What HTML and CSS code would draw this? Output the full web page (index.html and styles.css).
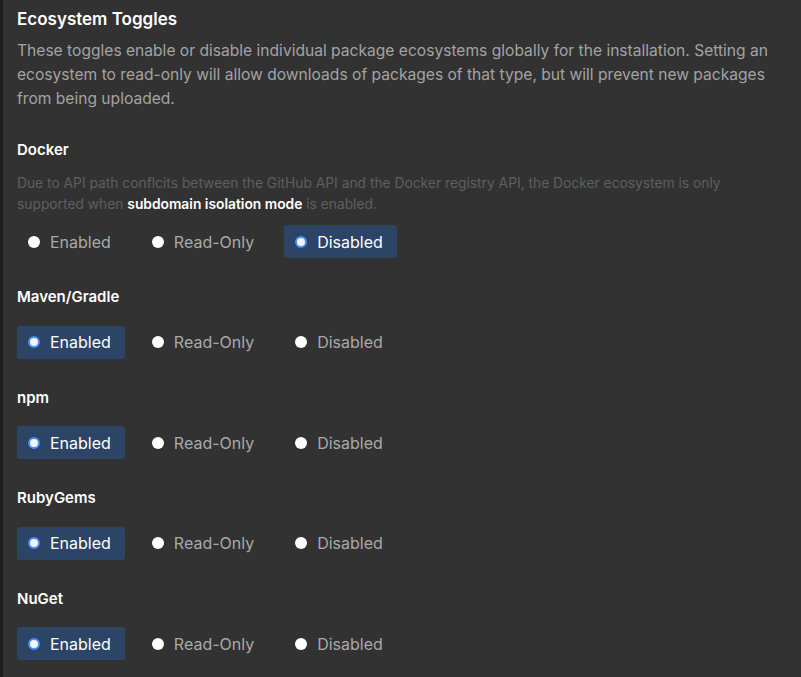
FILE: index.html
```html
<!DOCTYPE html>
<html>
<head>
<meta charset="utf-8">
<link rel="stylesheet" href="styles.css">
</head>
<body>
<div class="panel">
  <h2 class="title">Ecosystem Toggles</h2>
  <p class="intro">These toggles enable or disable individual package ecosystems globally for the installation. Setting an ecosystem to read-only will allow downloads of packages of that type, but will prevent new packages from being uploaded.</p>

  <section class="eco">
    <h3 class="eco-name">Docker</h3>
    <p class="note">Due to API path conflcits between the GitHub API and the Docker registry API, the Docker ecosystem is only supported when <strong>subdomain isolation mode</strong> is enabled.</p>
    <div class="options">
      <div class="opt"><span class="dot"></span>Enabled</div>
      <div class="opt"><span class="dot"></span>Read-Only</div>
      <div class="opt sel"><span class="dot"></span>Disabled</div>
    </div>
  </section>

  <section class="eco">
    <h3 class="eco-name">Maven/Gradle</h3>
    <div class="options">
      <div class="opt sel"><span class="dot"></span>Enabled</div>
      <div class="opt"><span class="dot"></span>Read-Only</div>
      <div class="opt"><span class="dot"></span>Disabled</div>
    </div>
  </section>

  <section class="eco">
    <h3 class="eco-name">npm</h3>
    <div class="options">
      <div class="opt sel"><span class="dot"></span>Enabled</div>
      <div class="opt"><span class="dot"></span>Read-Only</div>
      <div class="opt"><span class="dot"></span>Disabled</div>
    </div>
  </section>

  <section class="eco">
    <h3 class="eco-name">RubyGems</h3>
    <div class="options">
      <div class="opt sel"><span class="dot"></span>Enabled</div>
      <div class="opt"><span class="dot"></span>Read-Only</div>
      <div class="opt"><span class="dot"></span>Disabled</div>
    </div>
  </section>

  <section class="eco">
    <h3 class="eco-name">NuGet</h3>
    <div class="options">
      <div class="opt sel"><span class="dot"></span>Enabled</div>
      <div class="opt"><span class="dot"></span>Read-Only</div>
      <div class="opt"><span class="dot"></span>Disabled</div>
    </div>
  </section>
</div>
</body>
</html>
```
FILE: styles.css
```css
html, body {
  margin: 0;
  padding: 0;
  background: #323232;
}
body {
  font-family: Inter, "Liberation Sans", sans-serif;
  color: #fff;
  width: 801px;
  height: 677px;
  overflow: hidden;
}
.panel {
  border-left: 3px solid #1d1d1d;
  padding: 7px 0 0 14px;
  height: 677px;
  box-sizing: border-box;
}
.title {
  margin: 0;
  font-size: 17px;
  font-weight: 600;
  line-height: 24px;
}
.intro {
  margin: 8px 0 0;
  font-size: 15.6px;
  line-height: 24px;
  color: #a3a3a3;
  width: 775px;
}
.eco-name {
  margin: 0;
  font-size: 15px;
  font-weight: 600;
  line-height: 20px;
  padding-top: 29px;
}
.note {
  margin: 12.5px 0 0;
  font-size: 13.8px;
  line-height: 21px;
  color: #5f5f5f;
  width: 745px;
}
.note strong {
  color: #fff;
  font-weight: 600;
}
.options {
  display: flex;
  gap: 16px;
  margin-top: 10.5px;
}
.eco-name + .options {
  margin-top: 18.5px;
}
.opt {
  display: flex;
  align-items: center;
  height: 33px;
  padding: 0 14px 0 11px;
  gap: 10px;
  border-radius: 3px;
  font-size: 16px;
  color: #a9a9a9;
  box-sizing: border-box;
}
.dot {
  width: 12px;
  height: 12px;
  border-radius: 50%;
  background: #fff;
  box-sizing: border-box;
  flex: none;
}
.opt.sel {
  background: #2c4465;
  color: #fff;
}
.opt.sel .dot {
  border: 2.5px solid #4b8df4;
  background: #f2f6ff;
}
```
